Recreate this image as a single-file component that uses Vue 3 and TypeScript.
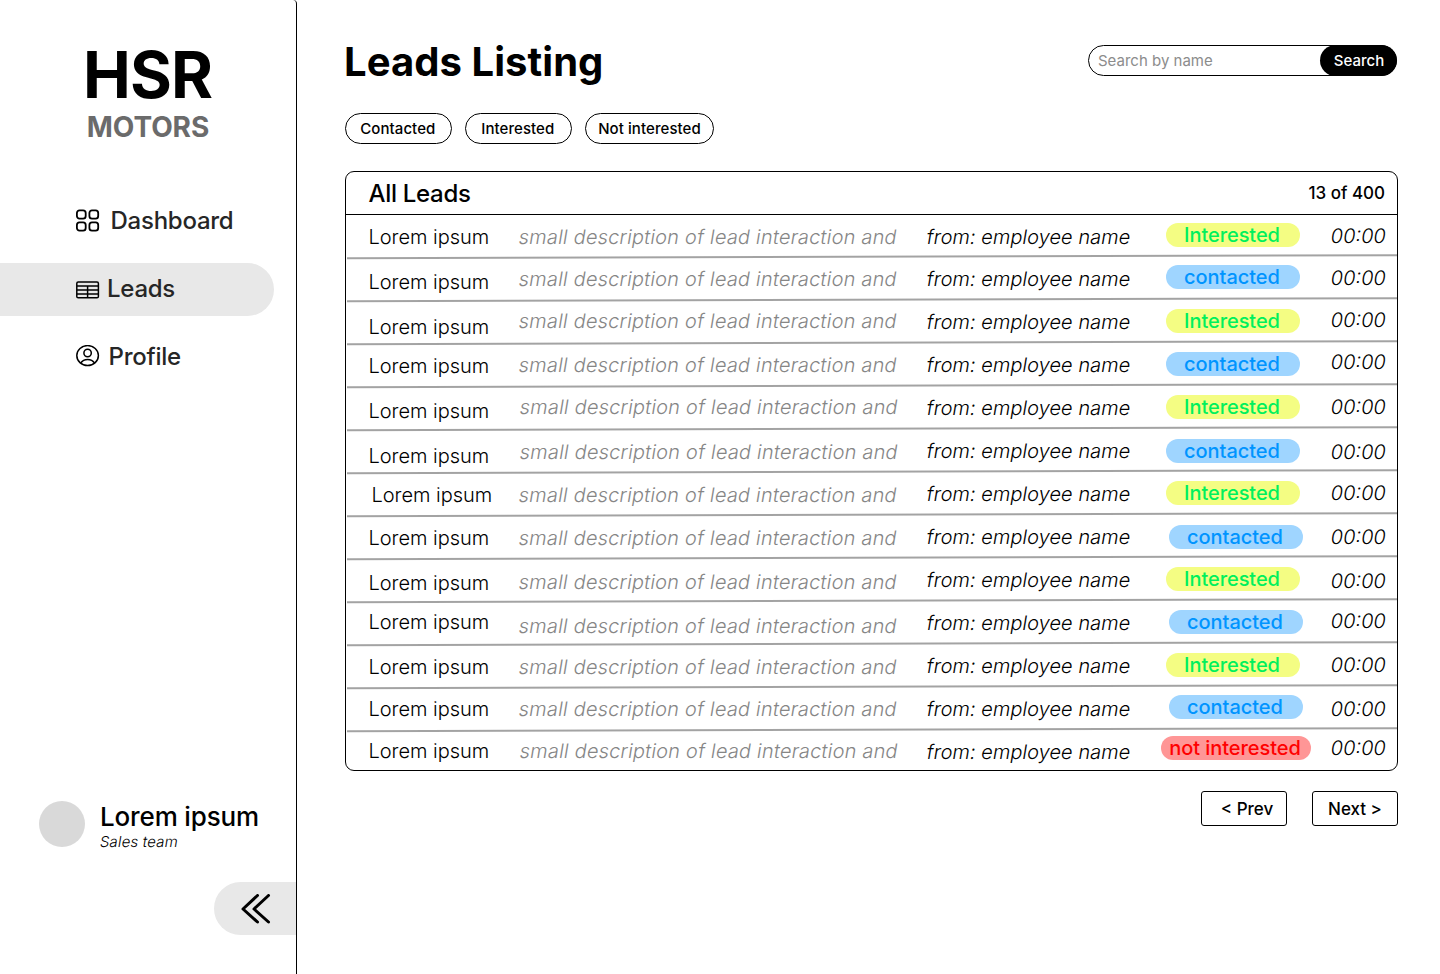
<script setup lang="ts">
import { ref } from 'vue'

type Status = 'Interested' | 'contacted' | 'not interested'

interface Lead {
  status: Status
  // vertical offsets of each cell inside its row: name, description, owner, badge, time
  tops: [number, number, number, number, number]
  nameShift?: number
  textShift?: number
  badgeShift?: number
}

const filters = ['Contacted', 'Interested', 'Not interested']
const query = ref('')

const leads: Lead[] = [
  { status: 'Interested', tops: [10, 10, 10, 8, 9] },
  { status: 'contacted', tops: [12, 9, 9, 7, 8] },
  { status: 'Interested', tops: [14, 8, 9, 8, 7] },
  { status: 'contacted', tops: [10, 9, 9, 8, 6] },
  { status: 'Interested', tops: [12, 8, 9, 8, 8], textShift: 1 },
  { status: 'contacted', tops: [14, 10, 9, 9, 10], textShift: 1 },
  { status: 'Interested', tops: [10, 10, 9, 8, 8], nameShift: 3 },
  { status: 'contacted', tops: [10, 10, 9, 9, 9], badgeShift: 3 },
  { status: 'Interested', tops: [12, 11, 9, 8, 10] },
  { status: 'contacted', tops: [8, 12, 9, 8, 7], badgeShift: 3 },
  { status: 'Interested', tops: [10, 10, 9, 8, 8] },
  { status: 'contacted', tops: [9, 9, 9, 7, 9], badgeShift: 3 },
  { status: 'not interested', tops: [8, 8, 9, 5, 5], textShift: 1 },
]

const place = (top: number, left = 0) => ({ marginTop: `${top}px`, marginLeft: `${left}px` })
</script>

<template>
  <div class="page">
    <aside class="sidebar">
      <div class="brand">
        <div class="brand-name">HSR</div>
        <div class="brand-sub">MOTORS</div>
      </div>

      <nav class="nav">
        <a class="nav-item dashboard">
          <svg width="24" height="24" viewBox="0 0 24 24" fill="none" stroke="#000" stroke-width="1.8">
            <rect x="0.9" y="1.3" width="8.8" height="8.4" rx="2.6" />
            <rect x="13.4" y="1.3" width="8.8" height="8.4" rx="2.6" />
            <rect x="0.9" y="13.3" width="8.8" height="8.4" rx="2.6" />
            <rect x="13.4" y="13.3" width="8.8" height="8.4" rx="2.6" />
          </svg>
          <span>Dashboard</span>
        </a>
        <a class="nav-item leads">
          <svg width="24" height="20" viewBox="0 0 24 20" fill="none" stroke="#000" stroke-width="1.5">
            <rect x="0.8" y="3" width="21.6" height="15.8" rx="1.4" />
            <path d="M1 7h21.4M1 11h21.4M1 14.9h21.4M11.6 7v12" />
          </svg>
          <span>Leads</span>
        </a>
        <a class="nav-item profile">
          <svg width="24" height="24" viewBox="0 0 24 24" fill="none" stroke="#000" stroke-width="1.5">
            <ellipse cx="11.6" cy="10.6" rx="10.8" ry="10" />
            <circle cx="11.6" cy="8" r="3.7" />
            <path d="M4.6 18.1C6.3 15.6 8.7 14.4 11.6 14.4S17 15.6 18.7 18.1" />
          </svg>
          <span>Profile</span>
        </a>
      </nav>

      <div class="user">
        <div class="avatar"></div>
        <div>
          <div class="user-name">Lorem ipsum</div>
          <div class="user-role">Sales team</div>
        </div>
      </div>

      <button class="collapse" aria-label="Collapse">
        <svg width="30" height="30" viewBox="0 0 30 30" fill="none" stroke="#000" stroke-width="3" stroke-linecap="round" stroke-linejoin="round">
          <path d="M16.5 1.5L2 15L16.5 28M27.5 1.5L13 15L27.5 28" />
        </svg>
      </button>
    </aside>

    <main class="main">
      <header class="top">
        <h1>Leads Listing</h1>
        <form class="search" @submit.prevent>
          <input v-model="query" placeholder="Search by name" />
          <button>Search</button>
        </form>
      </header>

      <div class="filters">
        <button v-for="f in filters" :key="f" class="filter">{{ f }}</button>
      </div>

      <section class="table">
        <div class="table-head">
          <h2>All Leads</h2>
          <span class="count">13 of 400</span>
        </div>
        <div v-for="(lead, i) in leads" :key="i" class="row">
          <span class="name" :style="place(lead.tops[0], lead.nameShift)">Lorem ipsum</span>
          <span class="desc" :style="place(lead.tops[1], lead.textShift)">small description of lead interaction and</span>
          <span class="owner" :style="place(lead.tops[2])">from: employee name</span>
          <span class="badge" :class="lead.status.replace(' ', '-')" :style="place(lead.tops[3], lead.badgeShift)">{{ lead.status }}</span>
          <span class="time" :style="place(lead.tops[4])">00:00</span>
          <svg v-if="i < leads.length - 1" class="rule" width="1051" height="6" viewBox="0 0 1051 6">
            <path d="M1 4.2L1051 1.2" stroke="#000" stroke-opacity="0.36" stroke-width="2" />
          </svg>
        </div>
      </section>

      <div class="pager">
        <button class="prev">&lt; Prev</button>
        <button class="next">Next &gt;</button>
      </div>
    </main>
  </div>
</template>

<style>
body {
  margin: 0;
  background: #fff;
}
</style>

<style scoped>
.page {
  display: flex;
  width: 1440px;
  height: 974px;
  overflow: hidden;
  font-family: Inter, 'Liberation Sans', sans-serif;
  color: #000;
}
.page * {
  box-sizing: border-box;
  white-space: nowrap;
}
button,
input {
  font-family: inherit;
  color: inherit;
  padding: 0;
  margin: 0;
}
.sidebar {
  display: flex;
  flex-direction: column;
  width: 297px;
  flex: none;
  border-right: 1px solid #000;
  border-top-right-radius: 4px;
}
.brand {
  height: 195px;
  padding-top: 36px;
  text-align: center;
}
.brand-name {
  padding-right: 1px;
  font-size: 64px;
  line-height: 78px;
  font-weight: 700;
  letter-spacing: -0.9px;
}
.brand-sub {
  font-size: 28px;
  line-height: 26px;
  font-weight: 700;
  letter-spacing: -0.1px;
  color: #6b6b6b;
}
.nav {
  display: flex;
  flex-direction: column;
  gap: 15px;
}
.nav-item {
  display: flex;
  align-items: center;
  width: 274px;
  height: 53px;
  padding: 0 0 2px 76px;
  font-size: 24px;
  font-weight: 500;
  letter-spacing: -0.25px;
  color: #262626;
}
.dashboard {
  gap: 10.5px;
}
.leads {
  gap: 7px;
  border-radius: 0 27px 27px 0;
  background: #e8e8e8;
}
.profile {
  gap: 8.5px;
}
.user {
  display: flex;
  gap: 15px;
  margin-top: 417px;
  padding-left: 39px;
}
.avatar {
  width: 46px;
  height: 46px;
  border-radius: 50%;
  background: #d9d9d9;
}
.user-name {
  font-size: 26px;
  line-height: 32px;
  font-weight: 500;
  letter-spacing: -0.15px;
}
.user-role {
  font-size: 15px;
  line-height: 18px;
  font-weight: 300;
  letter-spacing: 0.17px;
  transform: skewX(-9.4deg);
}
.collapse {
  display: flex;
  align-items: center;
  align-self: flex-end;
  width: 82px;
  height: 53px;
  margin-top: 31px;
  padding-left: 27px;
  border: 0;
  border-radius: 27px 0 0 27px;
  background: #e8e8e8;
}
.main {
  width: 1053px;
  margin-left: 48px;
}
.top {
  display: flex;
  justify-content: space-between;
  height: 113px;
}
h1 {
  margin: 38px 0 0 -1px;
  font-size: 40px;
  line-height: 48px;
  font-weight: 700;
  letter-spacing: 0.06px;
}
.search {
  display: flex;
  width: 309px;
  height: 31px;
  margin: 45px 1px 0 0;
  border: 1px solid #000;
  border-radius: 16px;
}
.search input {
  flex: 1;
  min-width: 0;
  padding-left: 9px;
  border: 0;
  outline: 0;
  background: transparent;
  font-size: 15px;
}
.search input::placeholder {
  color: #8c8c8c;
  opacity: 1;
}
.search button {
  width: 77px;
  height: 31px;
  margin: -1px;
  padding-left: 1px;
  border: 0;
  border-radius: 16px;
  background: #000;
  color: #fff;
  font-size: 15px;
  font-weight: 500;
}
.filters {
  display: flex;
  gap: 13px;
}
.filter {
  width: 107px;
  height: 31px;
  padding-right: 1.4px;
  border: 1px solid #000;
  border-radius: 16px;
  background: #fff;
  font-size: 15px;
  font-weight: 500;
  letter-spacing: 0.08px;
}
.filter:last-child {
  width: 129px;
  padding-right: 0;
}
.table {
  height: 600px;
  margin-top: 27px;
  border: 1px solid #000;
  border-radius: 9px;
}
.table-head {
  display: flex;
  justify-content: space-between;
  align-items: center;
  height: 43px;
  padding: 0 12px 0 22.5px;
  border-bottom: 1px solid #000;
}
h2 {
  margin: 0;
  font-size: 24px;
  font-weight: 500;
  letter-spacing: -0.3px;
}
.count {
  font-size: 17px;
  font-weight: 500;
}
.row {
  position: relative;
  display: grid;
  grid-template-columns: 151px 407.2px 239.4px 165px 65px;
  align-items: start;
  height: 43px;
  padding-left: 22.4px;
  font-size: 20px;
  line-height: 24px;
  font-weight: 300;
}
/* slanted upright letterforms */
.desc,
.owner,
.time {
  transform: skewX(-9.4deg);
}
.desc {
  color: #868686;
  letter-spacing: 0.19px;
}
.owner {
  letter-spacing: 0.03px;
}
.badge {
  width: 134px;
  height: 24px;
  padding-right: 2px;
  border-radius: 12px;
  text-align: center;
  font-weight: 500;
  letter-spacing: -0.05px;
}
.Interested {
  background: #f4fd83;
  color: #00f05c;
}
.contacted {
  background: #9fd5ff;
  color: #0094ff;
}
.not-interested {
  width: 150px;
  background: #ff9696;
  color: #f00;
  transform: translateX(-5px);
}
.rule {
  position: absolute;
  left: 0;
  bottom: -2px;
}
.pager {
  display: flex;
  justify-content: flex-end;
  gap: 25px;
  margin-top: 20px;
}
.pager button {
  width: 86px;
  height: 35px;
  border: 1px solid #000;
  border-radius: 3px;
  background: #fff;
  font-size: 17px;
  font-weight: 500;
}
.pager .prev {
  padding-left: 6px;
}
</style>
